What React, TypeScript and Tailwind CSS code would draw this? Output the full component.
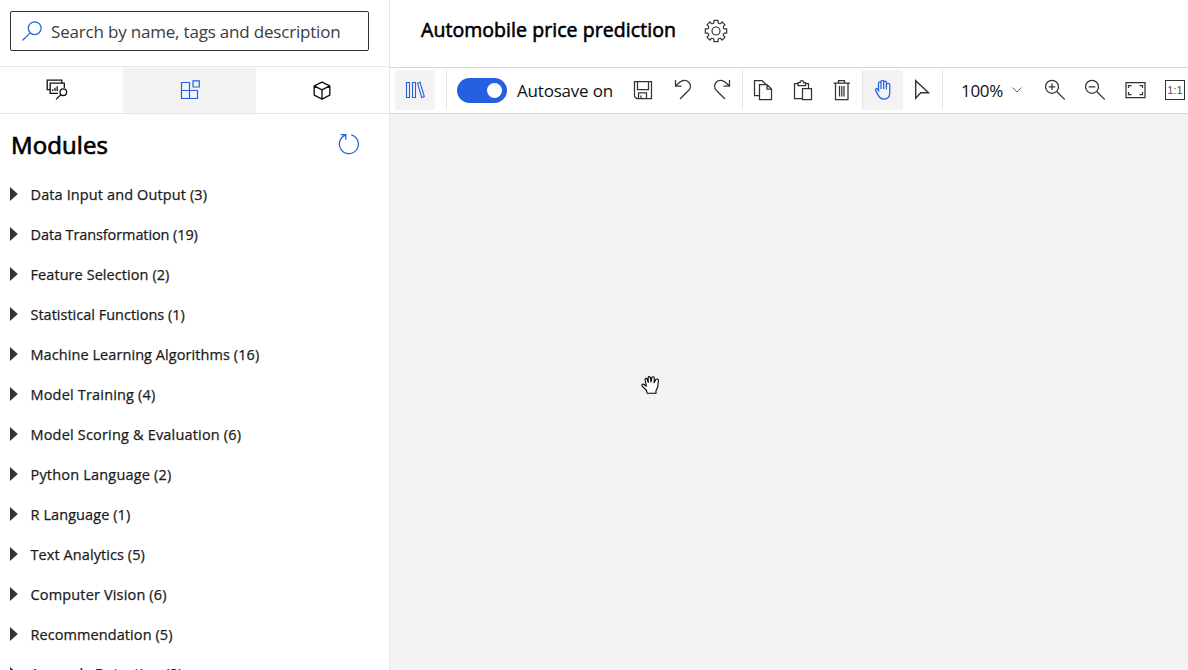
import type { ReactNode } from "react";

const modules = [
  { name: "Data Input and Output (3)", spacing: "tracking-[0.12px]" },
  { name: "Data Transformation (19)", spacing: "tracking-[-0.1px]" },
  { name: "Feature Selection (2)", spacing: "tracking-[0.07px]" },
  { name: "Statistical Functions (1)", spacing: "tracking-[0px]" },
  { name: "Machine Learning Algorithms (16)", spacing: "tracking-[0.07px]" },
  { name: "Model Training (4)", spacing: "tracking-[0.18px]" },
  { name: "Model Scoring & Evaluation (6)", spacing: "tracking-[0.18px]" },
  { name: "Python Language (2)", spacing: "tracking-[0.19px]" },
  { name: "R Language (1)", spacing: "tracking-[0.08px]" },
  { name: "Text Analytics (5)", spacing: "tracking-[0.08px]" },
  { name: "Computer Vision (6)", spacing: "tracking-[0.16px]" },
  { name: "Recommendation (5)", spacing: "tracking-[0.08px]" },
  { name: "Anomaly Detection (2)", spacing: "tracking-[0.15px]" },
];

function Tool({ label, active, children }: { label: string; active?: boolean; children: ReactNode }) {
  return (
    <button
      aria-label={label}
      className={
        active
          ? "size-10 shrink-0 rounded-[3px] bg-[#f3f3f3] text-[#2560e0]"
          : "size-10 shrink-0 text-[#333]"
      }
    >
      <svg viewBox="0 0 40 40" className="size-10" fill="none" stroke="currentColor" strokeWidth="1.25">
        {children}
      </svg>
    </button>
  );
}

function Divider() {
  return <div className="h-10 w-px shrink-0 bg-[#e6e6e6]" />;
}

function Sidebar() {
  return (
    <aside className="flex w-[390px] shrink-0 flex-col border-r border-[#e6e6e6] bg-white">
      <div className="h-[66px] shrink-0 px-2.5 pt-[11px]">
        <div className="flex h-10 w-[359px] items-center rounded-[2px] border border-[#323130] pl-[11px]">
          <svg viewBox="0 0 20 20" className="size-5 shrink-0" fill="none" stroke="#2560e0" strokeWidth="1.2">
            <circle cx="12.7" cy="7.2" r="6.4" />
            <path d="M8.1 11.8L.5 19.5" />
          </svg>
          <span className="mt-[2px] ml-[9px] text-[17px] leading-6 tracking-[-0.19px] whitespace-nowrap text-[#3c3c3c]">
            Search by name, tags and description
          </span>
        </div>
      </div>
      <div className="flex h-12 shrink-0 border-y border-[#e6e6e6] pt-px">
        <button aria-label="Datasets" className="flex w-[123px] justify-center pt-[11px] pr-[10px]">
          <svg viewBox="0 0 22 21" className="h-[21px] w-[22px]" fill="none" stroke="#111" strokeWidth="1.3">
            <path d="M4 10.7H1.2V1.2H15.8V4" />
            <path d="M12 14.3H4.2V4.2H18.3V9" />
            <path d="M6.7 12V10.2M9 12V8.8M11.2 12V7.2" />
            <circle cx="17.3" cy="13.2" r="3.3" />
            <path d="M14.8 15.8L10 20.4" />
          </svg>
        </button>
        <button aria-label="Modules" className="flex w-[133px] justify-center bg-[#f3f3f3] pt-[12px]">
          <svg viewBox="0 0 20 20" className="size-5" fill="none" stroke="#2560e0" strokeWidth="1.2">
            <path d="M1.5 2.5H9.5V18.5H1.5ZM1.5 10.5H17.5V18.5H9.5M13 .8H19.3V7H13Z" />
          </svg>
        </button>
        <button aria-label="Models" className="flex w-[133px] justify-center pt-[13px] pr-[2px]">
          <svg viewBox="0 0 20 20" className="size-5" fill="none" stroke="#111" strokeWidth="1.35" strokeLinejoin="round">
            <path d="M10 1.2L17.8 4.9V14.2L10 18.2L2.2 14.2V4.9ZM2.2 4.9L10 8.8L17.8 4.9M10 8.8V18.2" />
          </svg>
        </button>
      </div>
      <div className="flex h-[60px] shrink-0 items-center justify-between pr-[29px] pl-[11px]">
        <h2 className="mt-px text-[24px] leading-8 tracking-[0.1px] text-black [-webkit-text-stroke:0.7px_#000]">Modules</h2>
        <svg viewBox="0 0 22 22" className="mb-px size-[22px]" fill="none" stroke="#2560e0" strokeWidth="1.25">
          <path d="M13.3 1.9A9.5 9.5 0 1 1 7.5 2.2M2.7 1.6H7.8V6.7" />
        </svg>
      </div>
      <ul className="min-h-0 flex-1 overflow-hidden">
        {modules.map((m) => (
          <li key={m.name} className="group flex h-10 items-center pl-2.5">
            <svg viewBox="0 0 8 14" className="mb-px h-[14px] w-2" fill="#333">
              <path d="M0 0L7.8 7L0 14Z" />
            </svg>
            <span
              className={`mt-[2px] ml-[12.5px] text-[14.5px] leading-5 whitespace-nowrap text-[#1b1b1b] group-last:mt-0 [-webkit-text-stroke:0.25px_#1b1b1b] ${m.spacing}`}
            >
              {m.name}
            </span>
          </li>
        ))}
      </ul>
    </aside>
  );
}

function Toolbar() {
  return (
    <div className="flex h-[47px] shrink-0 overflow-hidden border-y border-[#d8d8d8] bg-white pt-[2px] pl-[5px]">
      <Tool label="Asset library" active>
        <path d="M11.5 12.5H14.5V27.5H11.5ZM17.5 12.5H20.5V27.5H17.5ZM22.5 13.2L25 12.3L29.3 26.7L26.7 27.5Z" strokeWidth="1.1" />
      </Tool>
      <div className="w-[11px] shrink-0" />
      <Divider />
      <div className="flex h-10 w-[176px] shrink-0 items-center pl-[10px]">
        <div className="flex h-[25px] w-[50px] shrink-0 items-center justify-end rounded-full bg-[#2560e0] pr-[5px]">
          <div className="size-[15px] rounded-full bg-white" />
        </div>
        <span className="mt-[2px] ml-[10px] text-[17px] leading-6 tracking-[-0.2px] whitespace-nowrap text-[#111]">
          Autosave on
        </span>
      </div>
      <Tool label="Save">
        <path d="M11.5 11.5H28.5V28.5H13.5L11.5 26.5ZM14.5 11.5V19.5H25.5V11.5M15.5 28.5V22.8H23.5V28.5M18 28.5V25.5" />
      </Tool>
      <Tool label="Undo">
        <path d="M12.5 10V16H18.5M12.5 16L17 12C20 9.5 24 10 26 12.5C28 15 27.5 18.3 25.5 20.5L17 29" />
      </Tool>
      <Tool label="Redo">
        <path d="M26.5 10V16H20.5M26.5 16L22 12C19 9.5 15 10 13 12.5C11 15 11.5 18.3 13.5 20.5L22 29" />
      </Tool>
      <div className="-ml-px flex">
        <Divider />
      </div>
      <Tool label="Copy">
        <path d="M16 25.5H11.5V10.5H19L22.8 14.3M16.5 14.5H24L28.5 19V29.5H16.5ZM24 14.5V19H28.5" />
      </Tool>
      <Tool label="Paste">
        <path d="M19 28.5H11.5V13.5H15M22.5 13.5H25.5V18M19.5 18.5H28.5V29.5H19.5ZM15 15.5V12.5H17Q17 10.5 18.8 10.5T20.5 12.5H22.5V15.5Z" />
      </Tool>
      <Tool label="Delete">
        <path d="M10.5 13H27M12.5 13V29.5H25V13M15.5 13V10.7H21.5V13M16.5 16V26.5M18.8 16V26.5M21 16V26.5" />
      </Tool>
      <div className="-ml-px flex">
        <Divider />
      </div>
      <Tool label="Pan" active>
        <path
          d="M15.5 21V13.2C15.5 11.4 18 11.4 18 13.2V19M18 13V11.6C18 9.8 20.7 9.8 20.7 11.6V19M20.7 12.5C20.7 10.8 23.4 10.8 23.4 12.5V19.5M23.4 14.8C23.4 13 26.8 13 26.8 14.8V22.5C26.8 26.5 24.5 29 20.8 29C17.8 29 16.5 27.6 15.3 25.4L12.6 20.4C11.9 18.9 13.8 18 14.8 19.4L16.3 21.4"
          strokeLinejoin="round"
        />
      </Tool>
      <Tool label="Select">
        <path d="M12.7 10.7V28.3L17.7 22.8H25.5Z" strokeWidth="1.4" />
      </Tool>
      <div className="-ml-px flex">
        <Divider />
      </div>
      <div className="flex h-10 w-[92px] shrink-0 items-center pl-[18px]">
        <span className="mt-[2px] w-[42px] text-[17px] leading-6 tracking-[-0.3px] text-[#111]">100%</span>
        <svg viewBox="0 0 10 6" className="ml-[9px] h-1.5 w-2.5" fill="none" stroke="#666" strokeWidth="1">
          <path d="M.5 .5L5 5L9.5 .5" />
        </svg>
      </div>
      <Tool label="Zoom in">
        <circle cx="17" cy="16.8" r="6.5" />
        <path d="M21.7 21.5L29.8 29.6M13.7 16.8H20.3M17 13.5V20.1" />
      </Tool>
      <Tool label="Zoom out">
        <circle cx="17" cy="16.8" r="6.5" />
        <path d="M21.7 21.5L29.8 29.6M13.7 16.8H20.3" />
      </Tool>
      <Tool label="Zoom to fit">
        <path d="M11 12.5H30V27.5H11ZM16.5 15.5H13.5V18M24.5 15.5H27.5V18M16.5 24.5H13.5V22M24.5 24.5H27.5V22" />
      </Tool>
      <button aria-label="Actual size" className="flex size-10 shrink-0 items-center justify-center">
        <span className="flex h-5 w-5 items-center justify-center border-[1.5px] border-[#333] font-['Liberation_Sans',sans-serif] text-[11px] leading-none text-[#555]">
          1:1
        </span>
      </button>
    </div>
  );
}

const gearTeeth = Array.from({ length: 8 }, (_, i) => {
  const at = (r: number, deg: number) => {
    const a = ((i * 45 + deg) * Math.PI) / 180;
    return `${(12 + r * Math.cos(a)).toFixed(2)} ${(12 + r * Math.sin(a)).toFixed(2)}`;
  };
  return `${i ? "L" : "M"}${at(8.6, -14)}L${at(10.9, -11)}L${at(10.9, 11)}L${at(8.6, 14)}Q${at(7.5, 22.5)} ${at(8.6, 31)}`;
}).join("");

export default function App() {
  return (
    <div className="flex h-[670px] w-[1188px] overflow-hidden bg-white font-['Open_Sans','Noto_Sans',sans-serif]">
      <Sidebar />
      <main className="flex min-w-0 flex-1 flex-col">
        <header className="flex h-[67px] shrink-0 items-center pb-[6px] pl-[30px]">
          <h1 className="mb-px w-[255px] pl-px text-[19.5px] leading-7 tracking-[0.06px] whitespace-nowrap text-black [-webkit-text-stroke:0.6px_#000]">
            Automobile price prediction
          </h1>
          <svg viewBox="0 0 24 24" className="ml-[29px] size-6" fill="none" stroke="#333" strokeWidth="1.2" strokeLinejoin="round">
            <path d={`${gearTeeth}Z`} />
            <circle cx="12" cy="12" r="4" />
          </svg>
        </header>
        <Toolbar />
        <div className="relative flex-1 bg-[#f3f3f3]">
          <svg viewBox="0 0 20 20" className="absolute top-[261px] left-[251px] size-5" fill="#fff" stroke="#000" strokeWidth="1.1" strokeLinejoin="round">
            <path d="M6.2 18.2L5.5 15.5L1 10.8Q.4 8.8 2.7 9.2L5.4 11.2L4 4.5Q4.4 2.7 6 3.9L7.3 7.5L7.1 2.6Q8 .8 9.4 2.4L10 7.2L10.8 2.6Q12.2 1 13.3 2.7L13.1 7.8L14.8 4.5Q16.6 3.2 17.4 5L16.8 12L15 15.5V18.2Z" />
          </svg>
        </div>
      </main>
    </div>
  );
}
